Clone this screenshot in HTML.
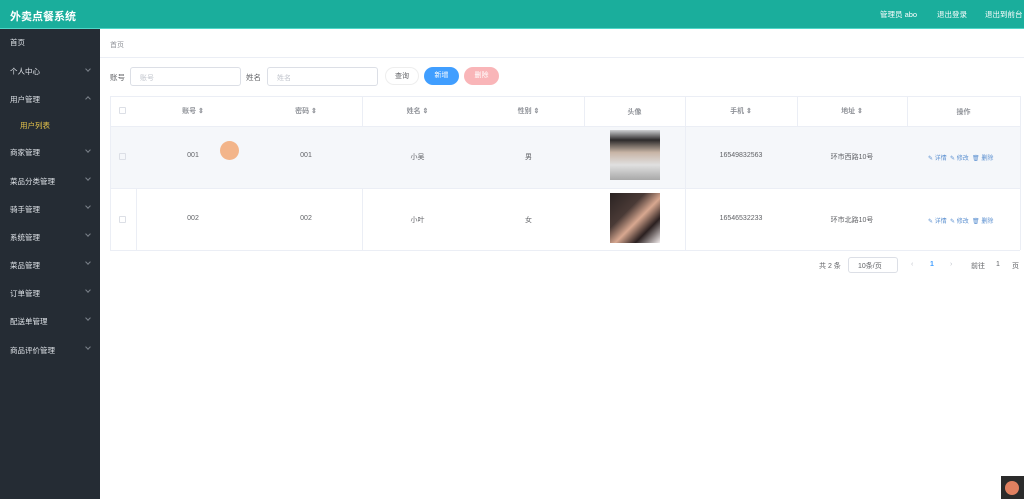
<!DOCTYPE html>
<html><head><meta charset="utf-8"><style>
*{margin:0;padding:0;box-sizing:border-box}
body{width:1024px;height:499px;overflow:hidden;background:#fff;font-family:"Liberation Sans","Noto Sans CJK SC",sans-serif;font-size:8px;color:#606266;position:relative}
.hd{position:absolute;left:0;top:0;width:1024px;height:29px;background:#1aae9c;border-bottom:1px solid #4fd6c8}
.hd .t{position:absolute;left:10px;top:8px;color:#fff;font-size:11px;font-weight:bold}
.hd span{position:absolute;top:9px;color:#fff;font-size:7.5px}
.sb{position:absolute;left:0;top:29px;width:100px;height:470px;background:#252c34}
.sb div{position:absolute;left:10px;color:#dfe3e8;font-size:7.5px}
.sb i{position:absolute;left:86px;width:4px;height:4px;border-right:1px solid #7a8189;border-bottom:1px solid #7a8189;transform:rotate(45deg)}
.ab{position:absolute}
.inp{position:absolute;height:19px;border:1px solid #dcdfe6;border-radius:3px;color:#c0c4cc;font-size:7px;padding:5px 0 0 9px}
.btn{position:absolute;height:18px;border-radius:9px;color:#fff;font-size:7px;text-align:center;line-height:18px}
.hl{position:absolute;height:1px;background:#ebeef5}
.vl{position:absolute;width:1px;background:#ebeef5}
.c{position:absolute;text-align:center;font-size:7px;color:#606266}
.th{font-weight:bold;color:#909399}
.op{position:absolute;font-size:6px;color:#5a8fd0}
.cb{position:absolute;width:7px;height:7px;border:1px solid #dcdfe6;border-radius:1px;left:119px}
</style></head><body>
<div class="hd"><div class="t">外卖点餐系统</div>
<span style="left:880px">管理员 abo</span><span style="left:937px">退出登录</span><span style="left:985px">退出到前台</span></div>
<div class="sb">
<div style="top:8px">首页</div>
<div style="top:37px">个人中心</div><i style="top:38px"></i>
<div style="top:65px">用户管理</div><i style="top:68px;transform:rotate(225deg)"></i>
<div style="top:91px;left:20px;color:#e6c34a">用户列表</div>
<div style="top:118px">商家管理</div><i style="top:119px"></i>
<div style="top:147px">菜品分类管理</div><i style="top:147px"></i>
<div style="top:175px">骑手管理</div><i style="top:175px"></i>
<div style="top:203px">系统管理</div><i style="top:203px"></i>
<div style="top:231px">菜品管理</div><i style="top:231px"></i>
<div style="top:259px">订单管理</div><i style="top:259px"></i>
<div style="top:287px">配送单管理</div><i style="top:287px"></i>
<div style="top:316px">商品评价管理</div><i style="top:316px"></i>
</div>
<div class="ab" style="left:110px;top:40px;font-size:7px;color:#909399">首页</div>
<div class="hl" style="left:100px;top:57px;width:924px"></div>
<div class="ab" style="left:110px;top:72px;font-size:7.5px">账号</div>
<div class="inp" style="left:130px;top:67px;width:111px">账号</div>
<div class="ab" style="left:246px;top:72px;font-size:7.5px">姓名</div>
<div class="inp" style="left:267px;top:67px;width:111px">姓名</div>
<div class="btn" style="left:385px;top:67px;width:34px;color:#606266;border:1px solid #eee">查询</div>
<div class="btn" style="left:424px;top:67px;width:35px;background:#409eff">新增</div>
<div class="btn" style="left:464px;top:67px;width:35px;background:#f9b5b8">删除</div>
<div class="ab" style="left:110px;top:126px;width:910px;height:62px;background:#f5f7fa"></div>
<div class="hl" style="left:110px;top:96px;width:910px"></div>
<div class="hl" style="left:110px;top:126px;width:910px"></div>
<div class="hl" style="left:110px;top:188px;width:910px"></div>
<div class="hl" style="left:110px;top:250px;width:910px"></div>
<div class="vl" style="left:110px;top:96px;height:154px"></div>
<div class="vl" style="left:1020px;top:96px;height:154px"></div>
<div class="vl" style="left:136px;top:188px;height:62px"></div>
<div class="vl" style="left:362px;top:96px;height:30px"></div><div class="vl" style="left:362px;top:188px;height:62px"></div>
<div class="vl" style="left:584px;top:96px;height:30px"></div>
<div class="vl" style="left:685px;top:96px;height:154px"></div>
<div class="vl" style="left:797px;top:96px;height:30px"></div>
<div class="vl" style="left:907px;top:96px;height:30px"></div>
<div class="cb" style="top:107px"></div><div class="cb" style="top:153px"></div><div class="cb" style="top:216px"></div>
<div class="c th" style="left:136px;width:114px;top:106px">账号 ⇕</div>
<div class="c th" style="left:250px;width:112px;top:106px">密码 ⇕</div>
<div class="c th" style="left:362px;width:111px;top:106px">姓名 ⇕</div>
<div class="c th" style="left:473px;width:111px;top:106px">性别 ⇕</div>
<div class="c th" style="left:584px;width:101px;top:107px">头像</div>
<div class="c th" style="left:685px;width:112px;top:106px">手机 ⇕</div>
<div class="c th" style="left:797px;width:110px;top:106px">地址 ⇕</div>
<div class="c th" style="left:907px;width:113px;top:107px">操作</div>
<div class="c" style="left:136px;width:114px;top:152px">001</div>
<div class="c" style="left:250px;width:112px;top:152px">001</div>
<div class="c" style="left:362px;width:111px;top:152px">小吴</div>
<div class="c" style="left:473px;width:111px;top:152px">男</div>
<div class="c" style="left:685px;width:112px;top:152px">16549832563</div>
<div class="c" style="left:797px;width:110px;top:152px">环市西路10号</div>
<div class="c" style="left:136px;width:114px;top:215px">002</div>
<div class="c" style="left:250px;width:112px;top:215px">002</div>
<div class="c" style="left:362px;width:111px;top:215px">小叶</div>
<div class="c" style="left:473px;width:111px;top:215px">女</div>
<div class="c" style="left:685px;width:112px;top:215px">16546532233</div>
<div class="c" style="left:797px;width:110px;top:215px">环市北路10号</div>
<div class="ab" style="left:610px;top:130px;width:50px;height:50px;background:linear-gradient(180deg,#cfd1d3 0,#2d2b2b 20%,#c8b5a6 45%,#e0e0e0 70%,#a8a8a8 100%)"></div>
<div class="ab" style="left:610px;top:193px;width:50px;height:50px;background:linear-gradient(135deg,#2a2322 0,#4a3a36 35%,#d8a890 55%,#2b2020 75%,#f4eeee 100%)"></div>
<div class="op" style="left:928px;top:153px">✎ 详情 &nbsp;✎ 修改 &nbsp;🗑 删除</div>
<div class="op" style="left:928px;top:216px">✎ 详情 &nbsp;✎ 修改 &nbsp;🗑 删除</div>
<div class="ab" style="left:220px;top:141px;width:19px;height:19px;border-radius:50%;background:#f3b58a"></div>
<div class="ab" style="left:819px;top:261px;font-size:7px">共 2 条</div>
<div class="inp" style="left:848px;top:257px;width:50px;height:16px;padding:3px 0 0 9px;color:#606266">10条/页</div>
<div class="ab" style="left:911px;top:261px;font-size:7px;color:#c0c4cc">‹</div>
<div class="ab" style="left:930px;top:261px;font-size:7px;color:#409eff;font-weight:bold">1</div>
<div class="ab" style="left:950px;top:261px;font-size:7px;color:#c0c4cc">›</div>
<div class="ab" style="left:971px;top:261px;font-size:7px">前往</div>
<div class="ab" style="left:996px;top:261px;font-size:7px">1</div>
<div class="ab" style="left:1012px;top:261px;font-size:7px">页</div>
<div class="ab" style="left:1001px;top:476px;width:23px;height:23px;background:#2b2b2b"><div style="margin:5px 0 0 4px;width:14px;height:14px;border-radius:50%;background:#e08060"></div></div>
</body></html>
